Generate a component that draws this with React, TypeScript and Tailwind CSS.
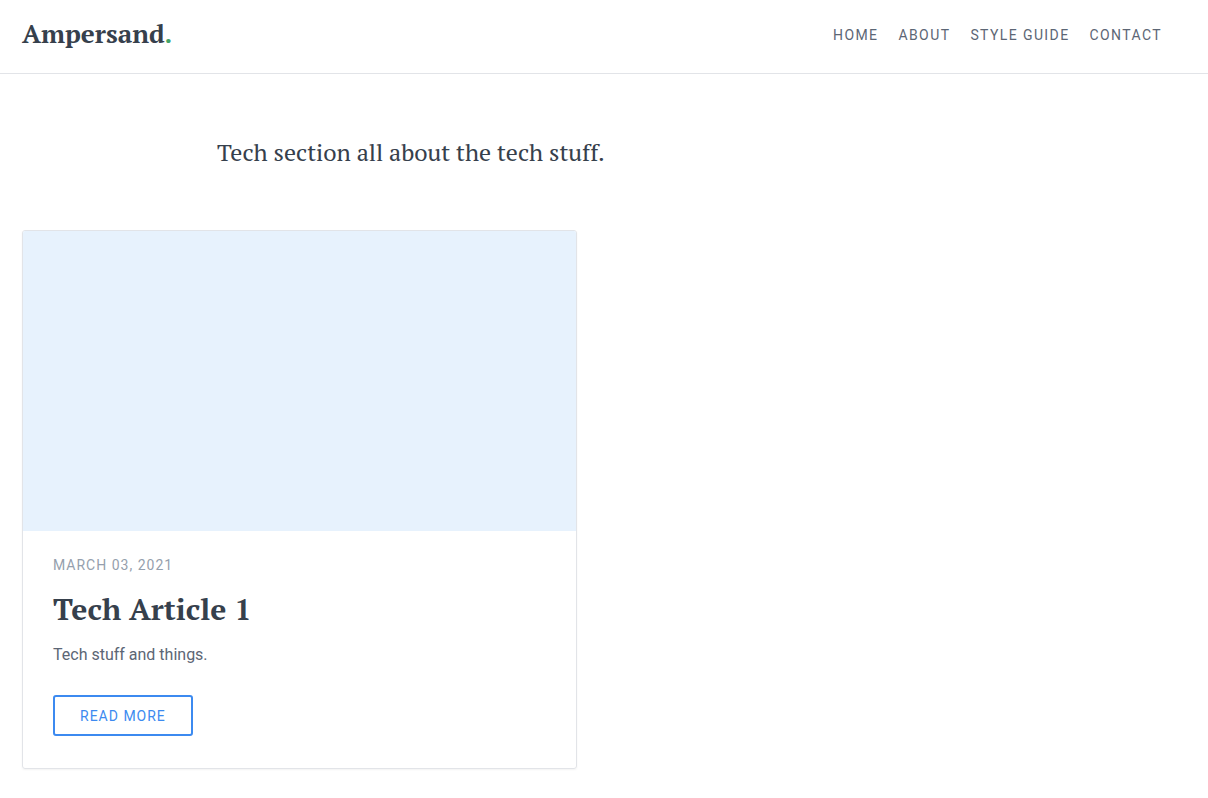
const navItems = [
  { label: "Home", href: "#home" },
  { label: "About", href: "#about" },
  { label: "Style guide", href: "#style-guide" },
  { label: "Contact", href: "#contact" },
];

function Header() {
  return (
    <header className="flex h-[74px] items-center justify-between border-b border-[#e2e4e8] pr-[46px] pl-[22px]">
      <a href="#home" className="pb-2 font-['PT_Serif','Noto_Serif','Liberation_Serif',serif] text-[26px] leading-8 font-bold text-[#36404c]">
        Ampersand<span className="text-[#42a468]">.</span>
      </a>
      <nav aria-label="Main" className="pb-1">
        <ul className="flex gap-5">
          {navItems.map((item) => (
            <li key={item.label}>
              <a href={item.href} className="text-sm tracking-widest text-[#5c6675] uppercase">
                {item.label}
              </a>
            </li>
          ))}
        </ul>
      </nav>
    </header>
  );
}

function ArticleCard() {
  return (
    <article className="overflow-hidden rounded-[3px] border border-[#e2e4e8] shadow-xs">
      <div className="h-[300px] bg-[#e7f2fd]" />
      <div className="px-[30px] pt-6 pb-8">
        <p className="text-sm leading-5 tracking-[1px] text-[#959fad] uppercase">March 03, 2021</p>
        <h2 className="mt-4 font-['PT_Serif','Noto_Serif','Liberation_Serif',serif] text-3xl leading-9 font-bold text-[#36404c]">
          Tech Article 1
        </h2>
        <p className="mt-4 text-base leading-6 text-[#5c6675]">Tech stuff and things.</p>
        <a
          href="#tech-article-1"
          className="mt-7 inline-flex h-[41px] items-center rounded-[3px] border-2 border-[#3c8af0] px-[25px] text-sm tracking-[1px] text-[#3c8af0] uppercase"
        >
          Read more
        </a>
      </div>
    </article>
  );
}

export default function App() {
  return (
    <div className="min-h-screen bg-white font-['Roboto',sans-serif] antialiased">
      <Header />
      <main className="px-[22px] pb-7">
        <p className="mx-auto max-w-[774px] py-[60px] font-['PT_Serif','Noto_Serif','Liberation_Serif',serif] text-2xl leading-9 text-[#36404c]">
          Tech section all about the tech stuff.
        </p>
        <div className="grid grid-cols-2 gap-[54px]">
          <ArticleCard />
        </div>
      </main>
    </div>
  );
}
